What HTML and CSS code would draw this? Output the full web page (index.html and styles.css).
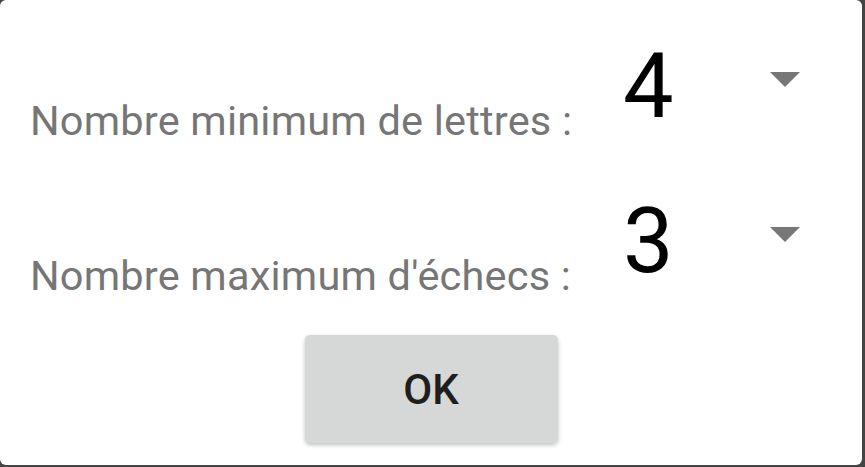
FILE: index.html
```html
<!DOCTYPE html>
<html lang="fr">
<head>
    <meta charset="UTF-8">
    <meta name="viewport" content="width=device-width, initial-scale=1.0">
    <title>Options</title>
    <link rel="stylesheet" href="styles.css">
</head>
<body>

    <div class="dialog">
        <!-- minimum letters -->
        <div class="row">
            <span class="label">Nombre minimum de lettres :</span>
            <div class="spinner">
                <span class="value">4</span>
                <svg class="arrow" width="30" height="15" viewBox="0 0 30 15"><polygon points="0,0 30,0 15,15" fill="#777"/></svg>
            </div>
        </div>

        <!-- maximum failures -->
        <div class="row row-last">
            <span class="label">Nombre maximum d'échecs :</span>
            <div class="spinner">
                <span class="value">3</span>
                <svg class="arrow" width="30" height="15" viewBox="0 0 30 15"><polygon points="0,0 30,0 15,15" fill="#777"/></svg>
            </div>
        </div>

        <div class="actions">
            <button class="ok-btn">OK</button>
        </div>
    </div>

</body>
</html>
```

FILE: styles.css
```css
body {
    margin: 0;
    background: #444;
    font-family: Roboto, "Liberation Sans", sans-serif;
}

.dialog {
    width: 862px;
    height: 465px;
    background: #fff;
    border-radius: 6px;
    box-sizing: border-box;
    padding-top: 41px;
}

.row {
    display: flex;
    align-items: flex-start;
    height: 155px;
    margin-left: 30px;
}

.row-last {
    height: 139px;
}

.label {
    font-size: 41.5px;
    letter-spacing: 0.2px;
    color: #767676;
    width: 593px;
    padding-top: 55px;
}

.spinner {
    display: flex;
    align-items: flex-start;
}

.value {
    font-size: 90px;
    line-height: 1;
    color: #000;
    width: 147px;
    margin-top: 1px;
}

.arrow {
    margin-top: 31px;
}

.actions {
    display: flex;
    justify-content: center;
}

.ok-btn {
    width: 253px;
    height: 108px;
    background: #d6d7d7;
    border: none;
    border-radius: 5px;
    font-family: Roboto, sans-serif;
    font-weight: 500;
    font-size: 42px;
    color: #1e1e1e;
    box-shadow: 0 2px 4px rgba(0, 0, 0, 0.25);
}
```
